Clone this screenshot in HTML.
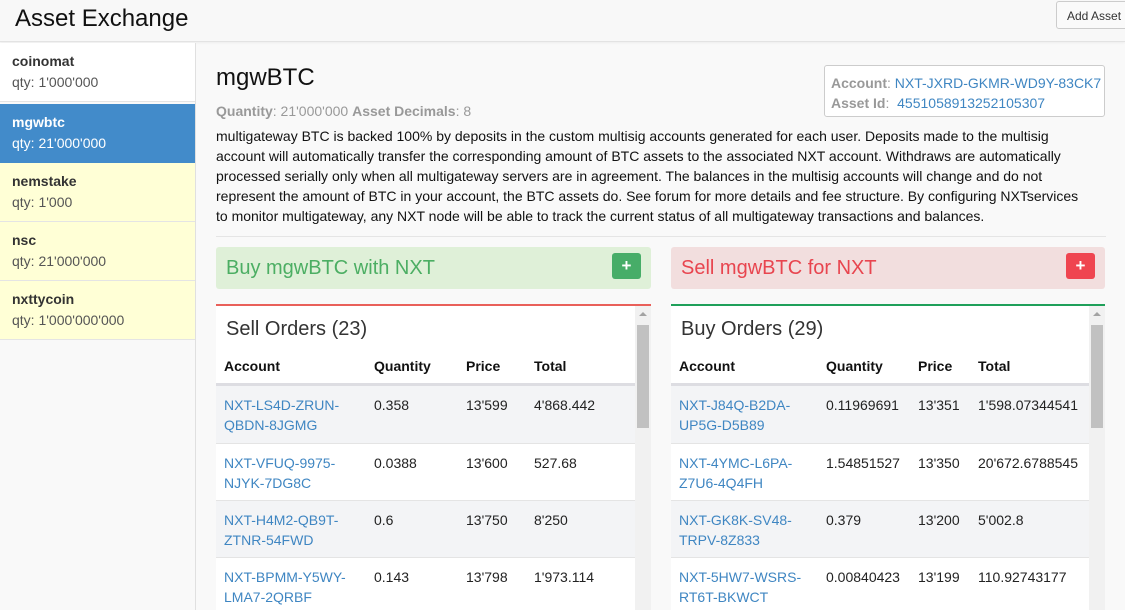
<!DOCTYPE html>
<html><head><style>
*{box-sizing:border-box;margin:0;padding:0}
body{width:1125px;height:610px;overflow:hidden;background:#f9f9f9;font-family:"Liberation Sans",Arial,sans-serif;color:#222;position:relative}
.a{position:absolute;white-space:nowrap}
.hdr{position:absolute;left:0;top:0;width:1125px;height:42px;background:#f8f8f8;border-bottom:1px solid #e3e3e3;box-shadow:0 1px 2px rgba(0,0,0,.05)}
.side{position:absolute;left:0;top:43px;width:196px;height:567px;background:#f9f9f9;border-right:1px solid #e0e0e0}
.it{position:absolute;left:0;width:195px;height:59px;border-bottom:1px solid #e4e4e4;padding:10px 0 0 12px}
.it b{display:block;font-size:14px;color:#333}
.it span{display:block;font-size:14px;color:#555;margin-top:5px}
.lk{color:#3f86c2}
.box{position:absolute;height:42px;border-radius:3px;font-size:20px;padding:10px 0 0 10px}
.pl{position:absolute;top:6px;width:29px;height:26px;border-radius:3px;color:#fff;font-size:17px;font-weight:bold;text-align:center;line-height:26px}
.pan{position:absolute;top:304px;width:435px;height:306px;background:#fff;overflow:hidden}
.pan h3{position:absolute;left:10px;top:12px;font-size:20px;font-weight:normal;color:#333}
.th{position:absolute;top:52px;font-size:14px;font-weight:bold;color:#111}
.hl{position:absolute;left:0;top:77px;width:419px;height:3px;background:#dddde2}
.row{position:absolute;left:0;width:419px;height:57px;font-size:14px}
.row div{position:absolute;top:9px;line-height:20px}
.sb{position:absolute;right:0;top:0;width:16px;height:306px;background:#f1f1f1}
.sb i{position:absolute;left:2px;top:19px;width:12px;height:103px;background:#c1c1c1}
.sb s{position:absolute;left:4px;top:6px;border:4px solid transparent;border-bottom:4px solid #a3a3a3;border-top:0}
</style></head><body>
<div class="hdr"></div>
<div class="a" style="left:15px;top:5px;font-size:24px;color:#111">Asset Exchange</div>
<div class="a" style="left:1056px;top:1px;width:80px;height:28px;border:1px solid #ccc;border-radius:3px;background:#fafafa;font-size:12px;color:#333;padding:7px 0 0 10px">Add Asset</div>
<div class="side">
<div class="it" style="top:0;background:#fff"><b>coinomat</b><span>qty: 1'000'000</span></div>
<div class="it" style="top:61px;background:#428bca;border-color:#428bca"><b style="color:#fff">mgwbtc</b><span style="color:#fff">qty: 21'000'000</span></div>
<div class="it" style="top:120px;background:#ffffd6"><b>nemstake</b><span>qty: 1'000</span></div>
<div class="it" style="top:179px;background:#ffffd6"><b>nsc</b><span>qty: 21'000'000</span></div>
<div class="it" style="top:238px;background:#ffffd6"><b>nxttycoin</b><span>qty: 1'000'000'000</span></div>
</div>
<div class="a" style="left:216px;top:64px;font-size:24px;color:#111">mgwBTC</div>
<div class="a" style="left:216px;top:103px;font-size:14px;color:#999"><b>Quantity</b>: 21'000'000 <b>Asset Decimals</b>: 8</div>
<div class="a" style="left:824px;top:65px;width:281px;height:52px;border:1px solid #ccc;border-radius:3px;background:#fff;font-size:14px;color:#999;padding:7px 0 0 6px;line-height:20px"><b>Account</b>: <span class="lk">NXT-JXRD-GKMR-WD9Y-83CK7</span><br><b>Asset Id</b>:&nbsp; <span class="lk">4551058913252105307</span></div>
<div class="a" style="left:216px;top:126px;font-size:14px;line-height:20px;color:#111">multigateway BTC is backed 100% by deposits in the custom multisig accounts generated for each user. Deposits made to the multisig<br>account will automatically transfer the corresponding amount of BTC assets to the associated NXT account. Withdraws are automatically<br>processed serially only when all multigateway servers are in agreement. The balances in the multisig accounts will change and do not<br>represent the amount of BTC in your account, the BTC assets do. See forum for more details and fee structure. By configuring NXTservices<br>to monitor multigateway, any NXT node will be able to track the current status of all multigateway transactions and balances.</div>
<div class="a" style="left:216px;top:236px;width:890px;height:1px;background:#e5e5e5"></div>
<div class="box" style="left:216px;top:247px;width:435px;background:#dff0d8;color:#4cae63">Buy mgwBTC with NXT<div class="pl" style="left:396px;background:#47ad68">+</div></div>
<div class="box" style="left:671px;top:247px;width:434px;background:#f2dede;color:#e8454f">Sell mgwBTC for NXT<div class="pl" style="left:395px;background:#ef4550">+</div></div>

<div class="pan" style="left:216px;border-top:2px solid #e9605a">
<h3>Sell Orders (23)</h3>
<div class="th" style="left:8px">Account</div><div class="th" style="left:158px">Quantity</div><div class="th" style="left:250px">Price</div><div class="th" style="left:318px">Total</div>
<div class="hl"></div>
<div class="row" style="top:80px;background:#f3f4f6"><div class="lk" style="left:8px">NXT-LS4D-ZRUN-<br>QBDN-8JGMG</div><div style="left:158px">0.358</div><div style="left:250px">13'599</div><div style="left:318px">4'868.442</div></div>
<div class="row" style="top:137px;border-top:1px solid #e4e4e4"><div class="lk" style="left:8px">NXT-VFUQ-9975-<br>NJYK-7DG8C</div><div style="left:158px">0.0388</div><div style="left:250px">13'600</div><div style="left:318px">527.68</div></div>
<div class="row" style="top:194px;background:#f3f4f6;border-top:1px solid #e4e4e4"><div class="lk" style="left:8px">NXT-H4M2-QB9T-<br>ZTNR-54FWD</div><div style="left:158px">0.6</div><div style="left:250px">13'750</div><div style="left:318px">8'250</div></div>
<div class="row" style="top:251px;border-top:1px solid #e4e4e4"><div class="lk" style="left:8px">NXT-BPMM-Y5WY-<br>LMA7-2QRBF</div><div style="left:158px">0.143</div><div style="left:250px">13'798</div><div style="left:318px">1'973.114</div></div>
<div class="sb"><s></s><i></i></div>
</div>

<div class="pan" style="left:671px;width:434px;border-top:2px solid #1fa05a">
<h3>Buy Orders (29)</h3>
<div class="th" style="left:8px">Account</div><div class="th" style="left:155px">Quantity</div><div class="th" style="left:247px">Price</div><div class="th" style="left:307px">Total</div>
<div class="hl" style="width:418px"></div>
<div class="row" style="top:80px;width:418px;background:#f3f4f6"><div class="lk" style="left:8px">NXT-J84Q-B2DA-<br>UP5G-D5B89</div><div style="left:155px">0.11969691</div><div style="left:247px">13'351</div><div style="left:307px">1'598.07344541</div></div>
<div class="row" style="top:137px;width:418px;border-top:1px solid #e4e4e4"><div class="lk" style="left:8px">NXT-4YMC-L6PA-<br>Z7U6-4Q4FH</div><div style="left:155px">1.54851527</div><div style="left:247px">13'350</div><div style="left:307px">20'672.6788545</div></div>
<div class="row" style="top:194px;width:418px;background:#f3f4f6;border-top:1px solid #e4e4e4"><div class="lk" style="left:8px">NXT-GK8K-SV48-<br>TRPV-8Z833</div><div style="left:155px">0.379</div><div style="left:247px">13'200</div><div style="left:307px">5'002.8</div></div>
<div class="row" style="top:251px;width:418px;border-top:1px solid #e4e4e4"><div class="lk" style="left:8px">NXT-5HW7-WSRS-<br>RT6T-BKWCT</div><div style="left:155px">0.00840423</div><div style="left:247px">13'199</div><div style="left:307px">110.92743177</div></div>
<div class="sb"><s></s><i></i></div>
</div>
</body></html>
